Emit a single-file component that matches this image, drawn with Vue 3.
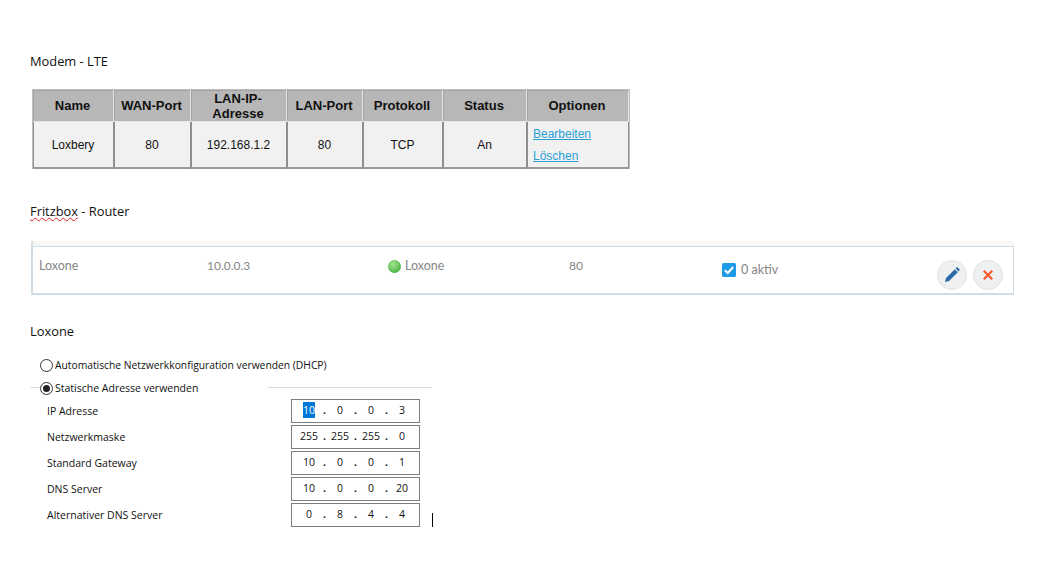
<script setup>
const columns = ['Name', 'WAN-Port', 'LAN-IP-Adresse', 'LAN-Port', 'Protokoll', 'Status', 'Optionen']
const widths = [81, 77, 96, 76, 80, 84, 102]
const cells = ['Loxbery', '80', '192.168.1.2', '80', 'TCP', 'An']
const network = [
  { label: 'IP Adresse', octets: ['10', '0', '0', '3'], selected: true },
  { label: 'Netzwerkmaske', octets: ['255', '255', '255', '0'] },
  { label: 'Standard Gateway', octets: ['10', '0', '0', '1'] },
  { label: 'DNS Server', octets: ['10', '0', '0', '20'] },
  { label: 'Alternativer DNS Server', octets: ['0', '8', '4', '4'] },
]
</script>

<template>
  <main class="page">
    <h2 class="heading first">Modem - LTE</h2>
    <table class="ports">
      <colgroup>
        <col v-for="(w, i) in widths" :key="i" :style="{ width: w + 'px' }" />
      </colgroup>
      <thead>
        <tr>
          <th v-for="c in columns" :key="c">{{ c }}</th>
        </tr>
      </thead>
      <tbody>
        <tr>
          <td v-for="(c, i) in cells" :key="i">{{ c }}</td>
          <td class="options">
            <a href="#">Bearbeiten</a>
            <a href="#">Löschen</a>
          </td>
        </tr>
      </tbody>
    </table>

    <h2 class="heading second"><span class="squiggle">Fritzbox</span> - Router</h2>
    <section class="router">
      <div class="band"></div>
      <div class="row">
        <span>Loxone</span>
        <span class="num">10.0.0.3</span>
        <span class="state"><i class="ball"></i>Loxone</span>
        <span class="num">80</span>
        <span class="state aktiv">
          <svg width="14" height="14" viewBox="0 0 14 14">
            <rect width="14" height="14" rx="1.5" fill="#1e9be8" />
            <path d="M2.8 7.2 5.8 10 11.2 4" fill="none" stroke="#fff" stroke-width="2" />
          </svg>
          0 aktiv
        </span>
        <div class="actions">
          <button type="button" aria-label="Bearbeiten">
            <svg width="16" height="16" viewBox="0 0 16 16">
              <path d="M1 15 2 11 10.8 2.2 13.8 5.2 5 14Z M11.6 1.4 12.4.6a1 1 0 0 1 1.4 0l1.6 1.6a1 1 0 0 1 0 1.4l-.8.8Z" fill="#2f6aa8" />
            </svg>
          </button>
          <button type="button" aria-label="Löschen">
            <svg width="12" height="12" viewBox="0 0 12 12">
              <path d="M1.8 1.8 10.2 10.2M10.2 1.8 1.8 10.2" fill="none" stroke="#f4572c" stroke-width="2.2" />
            </svg>
          </button>
        </div>
      </div>
    </section>

    <h2 class="heading third">Loxone</h2>
    <section class="config">
      <label class="radio-row"><i class="radio"></i>Automatische Netzwerkkonfiguration verwenden (DHCP)</label>
      <div class="static-row">
        <i class="stub"></i>
        <label class="radio-row static"><i class="radio on"></i>Statische Adresse verwenden</label>
        <i class="rule"></i>
      </div>
      <div class="fields">
        <div v-for="n in network" :key="n.label" class="field">
          <span class="label">{{ n.label }}</span>
          <div class="ip">
            <template v-for="(o, i) in n.octets" :key="i">
              <span class="octet"><b v-if="n.selected && i === 0" class="selected">{{ o }}</b><template v-else>{{ o }}</template></span>
              <span v-if="i < 3" class="dot">.</span>
            </template>
          </div>
        </div>
        <i class="caret"></i>
      </div>
    </section>
  </main>
</template>

<style>
html, body { background: #fff; }
</style>

<style scoped>
.page { width: 1040px; height: 574px; padding: 52px 0 0 30px; box-sizing: border-box; overflow: hidden; font-family: "Open Sans", sans-serif; }
.heading { margin: 0; font-size: 12.85px; line-height: 18px; font-weight: 400; color: #111; }
.second { margin-top: 33px; }
.third { margin-top: 27px; }
.squiggle { text-decoration: underline wavy #e02020 1px; text-underline-offset: 1px; }

.ports { margin: 19px 0 0 2px; width: 598px; height: 80px; table-layout: fixed; border-collapse: separate; border-spacing: 0; font-family: "Liberation Sans", Arial, sans-serif; color: #111; border: 1px solid #bdbdbd; border-width: 1px 1px 0 1px; box-sizing: border-box; }
.ports th { height: 32px; padding: 0 3px 0 2px; box-sizing: border-box; background: #b7b7b7; font-size: 13px; line-height: 15px; border-right: 1px solid #e4e4e4; border-bottom: 1px solid #e4e4e4; box-shadow: inset 1px 1px 0 #a4a4a4; }
.ports td { height: 46px; padding: 0 1px 0 0; box-sizing: border-box; background: #f1f1f1; font-size: 12px; text-align: center; border-right: 1px solid #8f8f8f; border-bottom: 2px solid #9a9a9a; border-left: 1px solid #8f8f8f; }
.ports td.options { text-align: left; padding-left: 5px; font-size: 12px; line-height: 22px; }
.options a { display: block; color: #2a9fd6; }

.router { margin: 21px 0 0 1px; width: 983px; color: #868686; font-family: Lato, sans-serif; font-size: 12.5px; }
.band { height: 5px; background: #f7f7f5; border-left: 2px solid #d5e1ea; border-bottom: 1px solid #cfdde6; }
.row { height: 48px; box-sizing: border-box; display: grid; grid-template-columns: 168px 181px 181px 153px 1fr auto; padding: 11px 10px 0 6px; border: 1px solid #cfdde6; border-left-width: 2px; border-top: 0; border-bottom-width: 2px; line-height: 16px; }
.num { font-size: 12px; }
.state { display: flex; align-items: center; gap: 4px; height: 16px; }
.aktiv { gap: 5px; margin-top: 4px; }
.ball { width: 13px; height: 13px; border-radius: 50%; background: radial-gradient(circle at 40% 35%, #a5e58f, #4fb548 70%); }
.actions { display: flex; gap: 6px; margin-top: 2px; }
.actions button { width: 30px; height: 30px; padding: 0; border-radius: 50%; border: 1px solid #dfe3e5; background: #eef0f1; display: flex; align-items: center; justify-content: center; }

.config { margin-top: 16px; font-family: "Open Sans", sans-serif; font-size: 10.5px; color: #111; }
.radio-row { display: flex; align-items: center; gap: 2px; height: 18px; padding-left: 10px; font-size: 10.3px; }
.radio-row.static { font-size: 10.5px; }
.radio { width: 13px; height: 13px; box-sizing: border-box; border: 1px solid #333; border-radius: 50%; background: #fff; flex: none; position: relative; }
.radio.on::after { content: ""; position: absolute; inset: 2px; border-radius: 50%; background: #222; }
.static-row { display: flex; align-items: center; width: 402px; height: 18px; margin-top: 5px; }
.static-row .radio-row { padding-left: 0; }
.stub { width: 10px; height: 1px; background: #ddd; margin-bottom: 2px; }
.rule { width: 164px; height: 1px; background: #ddd; margin-left: auto; margin-bottom: 2px; }
.fields { margin-top: 2px; position: relative; display: flex; flex-direction: column; gap: 2px; }
.field { display: flex; align-items: center; height: 24px; padding-left: 17px; }
.label { width: 244px; }
.ip { width: 129px; height: 24px; box-sizing: border-box; border: 1px solid #7d7d7d; display: grid; grid-template-columns: 20px 11px 20px 11px 20px 11px 20px; padding-left: 7px; line-height: 20px; text-align: center; }
.octet { white-space: nowrap; }
.dot { text-align: center; font-weight: 700; }
.selected { font-weight: 400; background: #0078d7; color: #fff; padding: 1px 0; }
.caret { position: absolute; left: 402px; bottom: 0; width: 1px; height: 14px; background: #000; }
</style>
